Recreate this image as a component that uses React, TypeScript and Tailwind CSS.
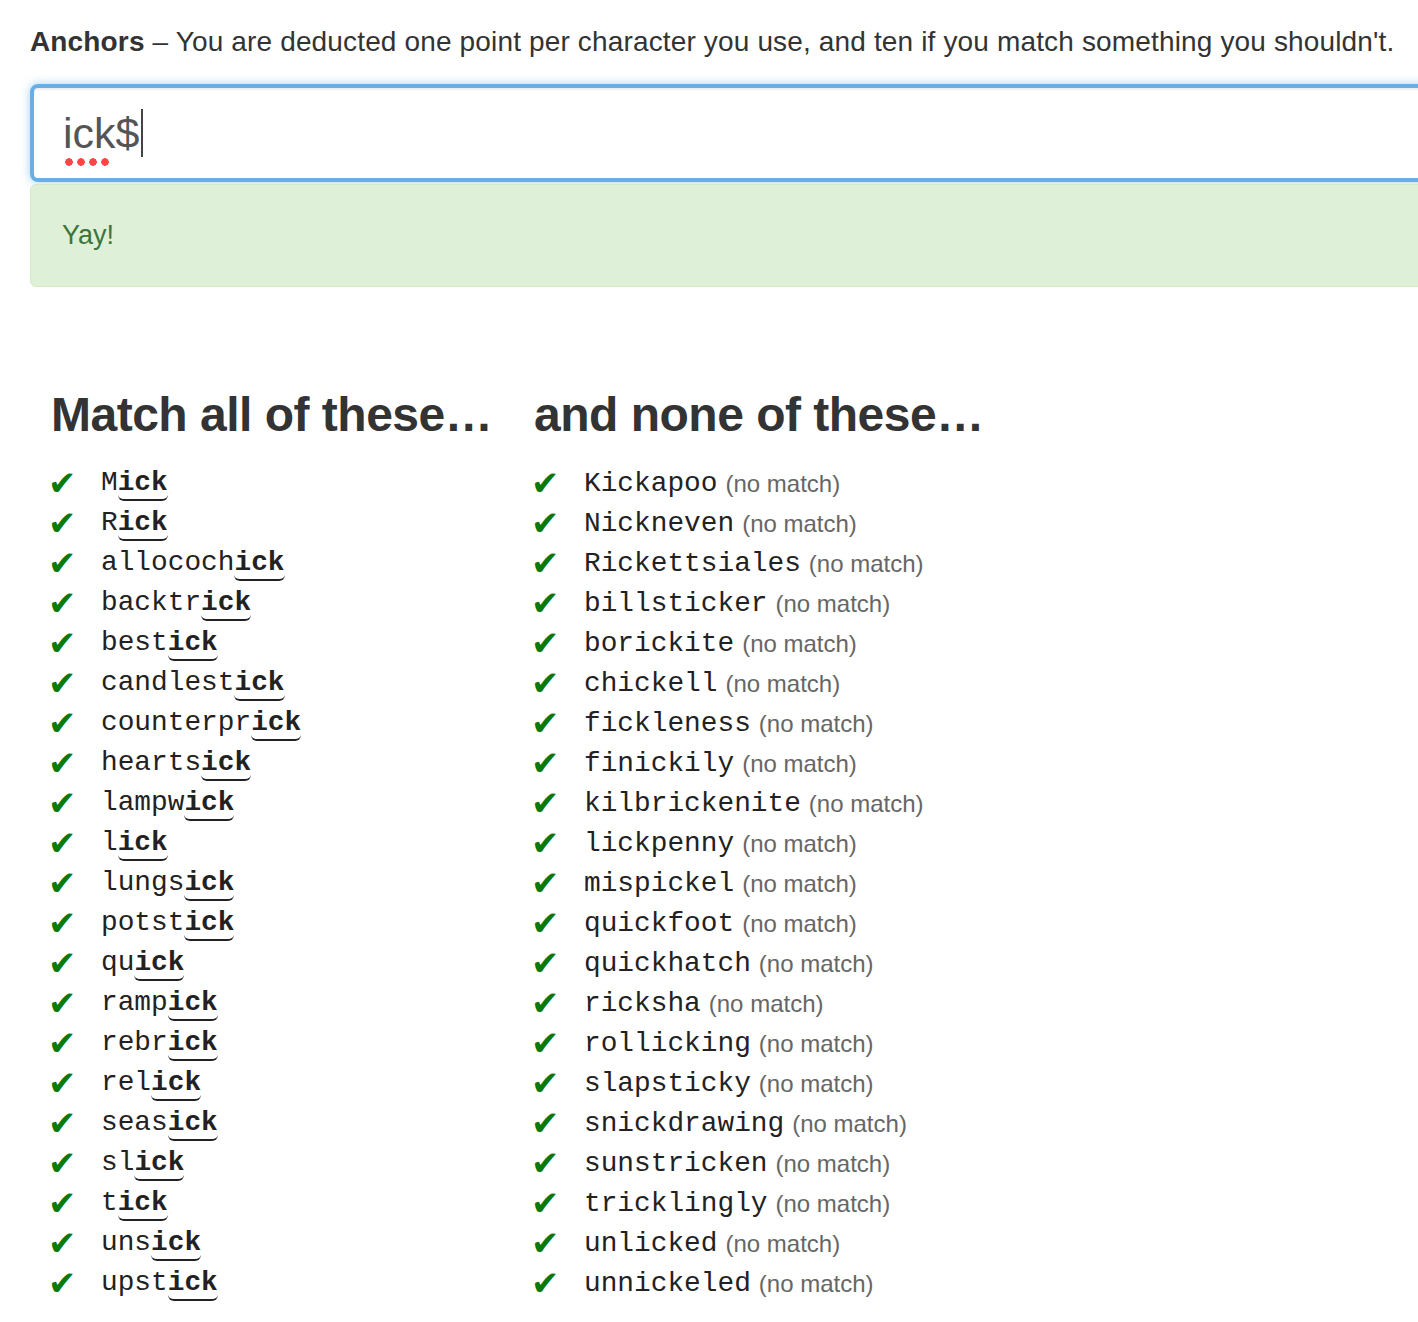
import React from 'react';

const matches: [string, string][] = [
  ['M', 'ick'],
  ['R', 'ick'],
  ['allococh', 'ick'],
  ['backtr', 'ick'],
  ['best', 'ick'],
  ['candlest', 'ick'],
  ['counterpr', 'ick'],
  ['hearts', 'ick'],
  ['lampw', 'ick'],
  ['l', 'ick'],
  ['lungs', 'ick'],
  ['potst', 'ick'],
  ['qu', 'ick'],
  ['ramp', 'ick'],
  ['rebr', 'ick'],
  ['rel', 'ick'],
  ['seas', 'ick'],
  ['sl', 'ick'],
  ['t', 'ick'],
  ['uns', 'ick'],
  ['upst', 'ick'],
];

const nonMatches = [
  'Kickapoo',
  'Nickneven',
  'Rickettsiales',
  'billsticker',
  'borickite',
  'chickell',
  'fickleness',
  'finickily',
  'kilbrickenite',
  'lickpenny',
  'mispickel',
  'quickfoot',
  'quickhatch',
  'ricksha',
  'rollicking',
  'slapsticky',
  'snickdrawing',
  'sunstricken',
  'tricklingly',
  'unlicked',
  'unnickeled',
];

const sans = "font-['Liberation_Sans','Helvetica_Neue',Arial,sans-serif]";
const mono = "font-['Liberation_Mono','Courier_New',monospace]";

const Check = () => (
  <span className="-ml-[3px] -mt-[5px] w-[53px] shrink-0 font-['DejaVu_Sans',sans-serif] text-[34px] leading-none text-[#0a7a0a]">
    ✔
  </span>
);

export default function App() {
  return (
    <div className={`w-full overflow-hidden bg-white text-[#333] ${sans}`}>
      <div className="w-[1560px] pl-[30px] pt-[23px]">
        <p className="text-[28px] leading-[38px] tracking-[0.15px]">
          <b>Anchors</b> – You are deducted one point per character you use, and ten if you match something you shouldn't.
        </p>

        <div className="mt-[23px] flex h-[98px] items-center rounded-[8px] border-[4px] border-[#66afe9] bg-white pl-[29px] shadow-[0_0_10px_rgba(102,175,233,0.6),inset_0_2px_2px_rgba(0,0,0,0.07)]">
          <span className="relative text-[43px] leading-none text-[#555]">
            ick
            <span className="absolute left-0 top-[45px] h-[10px] w-[48px] bg-[radial-gradient(circle,#f44_3.5px,transparent_4px)] bg-[length:12px_10px]" />
          </span>
          <span className="text-[43px] leading-none text-[#555]">$</span>
          <span className="ml-[2px] h-[48px] w-[2px] bg-[#444]" />
        </div>

        <div className="mt-[2px] flex h-[103px] items-center rounded-[6px] border border-[#d6e9c6] bg-[#dff0d8] pl-[31px] text-[27px] text-[#3c763d]">
          Yay!
        </div>

        <div className="mt-[98px] flex pl-[21px]">
          <div className="w-[483px]">
            <h2 className="text-[48px] font-bold leading-[60px] tracking-[-0.5px]">Match all of these…</h2>
            <ul className="mt-[20px]">
              {matches.map(([pre, hit], i) => (
                <li key={i} className="flex h-[40px] items-center">
                  <Check />
                  <span className={`${mono} text-[27.8px] leading-none text-[#222]`}>
                    {pre}
                    <b className="inline-block rounded-b-[6px] border-b-2 border-[#222] pb-[2px] leading-none">{hit}</b>
                  </span>
                </li>
              ))}
            </ul>
          </div>
          <div>
            <h2 className="text-[48px] font-bold leading-[60px] tracking-[-0.5px]">and none of these…</h2>
            <ul className="mt-[20px]">
              {nonMatches.map((w) => (
                <li key={w} className="flex h-[40px] items-center">
                  <Check />
                  <span className={`${mono} -mt-[3px] text-[27.8px] leading-none text-[#222]`}>{w}</span>
                  <span className="-mt-[3px] ml-[8px] text-[24px] leading-none text-[#666]">(no match)</span>
                </li>
              ))}
            </ul>
          </div>
        </div>
        <div className="h-[30px]" />
      </div>
    </div>
  );
}
